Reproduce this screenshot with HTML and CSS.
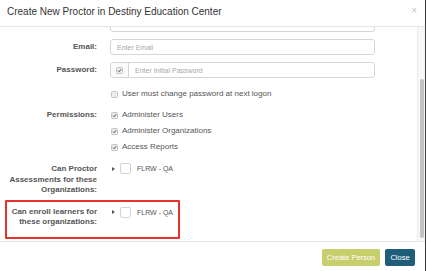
FILE: index.html
```html
<!DOCTYPE html>
<html>
<head>
<meta charset="utf-8">
<link rel="stylesheet" href="styles.css">
</head>
<body>
<div class="modal">
  <div class="modal-header">
    <h1 class="modal-title">Create New Proctor in Destiny Education Center</h1>
    <span class="close">×</span>
  </div>
  <div class="modal-main">
    <div class="modal-body">
      <div class="form">
        <div class="row">
          <label class="lbl">Middle Name:</label>
          <div class="ctrl"><div class="input"></div></div>
        </div>
        <div class="row gap7">
          <label class="lbl">Email:</label>
          <div class="ctrl"><div class="input"><span class="ph">Enter Email</span></div></div>
        </div>
        <div class="row gap7">
          <label class="lbl">Password:</label>
          <div class="ctrl">
            <div class="input group">
              <span class="addon"><span class="cb checked"><svg viewBox="0 0 6 6" width="6" height="6"><path d="M1.2 3.1 L2.5 4.4 L4.9 1.5" fill="none" stroke="#444" stroke-width="1.1"/></svg></span></span>
              <span class="ph">Enter Initial Password</span>
            </div>
          </div>
        </div>
        <div class="row user-must">
          <span class="lbl"></span>
          <div class="ctrl check-line"><span class="cb"></span><span class="ctext">User must change password at next logon</span></div>
        </div>
        <div class="row perms">
          <label class="lbl perm-lbl">Permissions:</label>
          <div class="ctrl checks">
            <div class="check-row"><span class="cb checked"><svg viewBox="0 0 6 6" width="6" height="6"><path d="M1.2 3.1 L2.5 4.4 L4.9 1.5" fill="none" stroke="#444" stroke-width="1.1"/></svg></span><span class="ctext">Administer Users</span></div>
            <div class="check-row"><span class="cb checked"><svg viewBox="0 0 6 6" width="6" height="6"><path d="M1.2 3.1 L2.5 4.4 L4.9 1.5" fill="none" stroke="#444" stroke-width="1.1"/></svg></span><span class="ctext">Administer Organizations</span></div>
            <div class="check-row"><span class="cb checked"><svg viewBox="0 0 6 6" width="6" height="6"><path d="M1.2 3.1 L2.5 4.4 L4.9 1.5" fill="none" stroke="#444" stroke-width="1.1"/></svg></span><span class="ctext">Access Reports</span></div>
          </div>
        </div>
        <div class="row tree-group proctor">
          <label class="lbl multi">Can Proctor<br>Assessments for these<br>Organizations:</label>
          <div class="ctrl tree"><span class="caret"></span><span class="tbox"></span><span class="tname">FLRW - QA</span></div>
        </div>
        <div class="highlight">
          <div class="row tree-group enroll">
            <label class="lbl multi">Can enroll learners for<br>these organizations:</label>
            <div class="ctrl tree"><span class="caret"></span><span class="tbox"></span><span class="tname">FLRW - QA</span></div>
          </div>
        </div>
      </div>
    </div>
    <div class="scroll-track"><div class="scroll-thumb"></div></div>
  </div>
  <div class="modal-footer">
    <button class="btn btn-create">Create Person</button>
    <button class="btn btn-close">Close</button>
  </div>
</div>
</body>
</html>
```

FILE: styles.css
```css
* { box-sizing: border-box; }
html, body { margin: 0; padding: 0; }
body {
  background: #3b3b3b;
  font-family: "Liberation Sans", Arial, Helvetica, sans-serif;
  width: 426px;
  height: 271px;
  overflow: hidden;
}
.modal {
  width: 425px;
  height: 271px;
  background: #fff;
  display: flex;
  flex-direction: column;
}
.modal-header {
  height: 27px;
  flex: none;
  border-bottom: 1px solid #e6e6e6;
  display: flex;
  align-items: center;
  justify-content: space-between;
  padding: 0 8px 2px 7px;
  position: relative;
  z-index: 2;
  background: rgba(255, 255, 255, 0.96);
}
.modal-title {
  margin: 0;
  font-size: 10px;
  font-weight: normal;
  color: #333;
  line-height: 14px;
}
.close {
  color: #c4c4c4;
  font-size: 10px;
  line-height: 10px;
  margin-top: -3px;
}
.modal-main {
  height: 214px;
  flex: none;
  display: flex;
}
.modal-body {
  flex: 1;
  overflow: hidden;
}
.scroll-track {
  width: 8px;
  flex: none;
  background: #f8f8f8;
  border-left: 1px solid #ececec;
  padding: 52px 1px 0 2px;
}
.scroll-thumb {
  height: 159px;
  background: #c3c3c3;
  border-radius: 3px;
}
.form {
  margin-top: -11px;
  display: flex;
  flex-direction: column;
}
.row {
  display: grid;
  grid-template-columns: 97px 265px;
  column-gap: 13px;
  align-items: center;
}
.gap7 { margin-top: 7px; }
.lbl {
  text-align: right;
  font-weight: bold;
  font-size: 8px;
  color: #555;
  line-height: 10px;
  white-space: nowrap;
}
.input {
  height: 16px;
  border: 1px solid #d6d6d6;
  border-radius: 3px;
  display: flex;
  align-items: center;
  padding-left: 6px;
}
.input.group { padding-left: 0; }
.addon {
  width: 18px;
  height: 100%;
  border-right: 1px solid #d6d6d6;
  background: #fafafa;
  border-radius: 3px 0 0 3px;
  display: flex;
  align-items: center;
  justify-content: center;
  margin-right: 6px;
}
.ph {
  font-size: 7px;
  color: #a8a8a8;
}
.cb {
  width: 7px;
  height: 7px;
  border: 1px solid #c4c4c4;
  border-radius: 1.5px;
  background: #ececec;
  display: inline-flex;
  align-items: center;
  justify-content: center;
  flex: none;
}
.cb svg { display: block; width: 5px; height: 5px; }
.user-must { margin-top: 11px; }
.check-line, .check-row {
  display: flex;
  align-items: center;
  height: 10px;
}
.check-line .cb, .check-row .cb { margin-left: 1px; margin-right: 4px; }
.ctext {
  font-size: 8px;
  color: #555;
  line-height: 10px;
  white-space: nowrap;
}
.perms { margin-top: 8px; align-items: start; }
.perm-lbl { line-height: 16px; }
.checks { display: flex; flex-direction: column; }
.check-row { height: 16px; }
.tree-group { align-items: start; }
.proctor { margin-top: 9px; }
.multi { line-height: 10.5px; }
.tree {
  display: flex;
  align-items: center;
  height: 11px;
  margin-top: -1px;
  white-space: nowrap;
}
.caret {
  width: 0;
  height: 0;
  border-top: 2.5px solid transparent;
  border-bottom: 2.5px solid transparent;
  border-left: 3px solid #555;
  margin-left: 2px;
  margin-right: 5px;
}
.tbox {
  width: 11px;
  height: 11px;
  border: 1px solid #d4d4d4;
  border-radius: 2px;
  background: #fff;
  margin-right: 6px;
  flex: none;
}
.tname {
  font-size: 7px;
  color: #555;
}
.highlight {
  margin-top: 4px;
  margin-left: 5px;
  width: 175px;
  height: 39px;
  border: 2px solid #e5322d;
  border-radius: 1px;
  padding-top: 5px;
}
.highlight .row {
  grid-template-columns: 90px auto;
}
.highlight .tree { margin-top: 0; }
.modal-footer {
  flex: 1;
  border-top: 1px solid #e6e6e6;
  display: flex;
  justify-content: flex-end;
  align-items: flex-start;
  gap: 5px;
  padding: 7px 10px 0 0;
}
.btn {
  border: none;
  border-radius: 2px;
  color: #fff;
  font-family: "Liberation Sans", Arial, sans-serif;
  font-size: 7.5px;
  height: 17px;
  padding: 0;
  line-height: 17px;
  white-space: nowrap;
  text-align: center;
}
.btn-create { background: #c7cf6d; width: 58px; }
.btn-close { background: #1f5e79; width: 30px; }
```
